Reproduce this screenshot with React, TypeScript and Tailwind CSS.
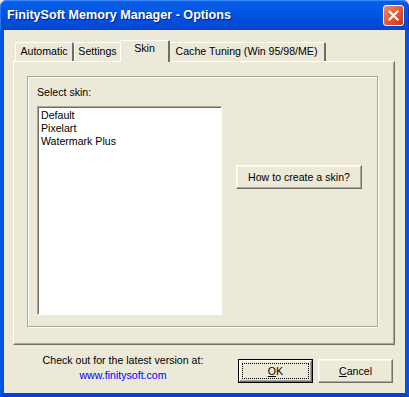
import React from "react";

const font = { fontFamily: '"Liberation Sans", Arial, sans-serif' };

function TitleBar() {
  return (
    <div className="relative h-[30px] rounded-t-[7px] bg-gradient-to-b from-[#0a5fe8] via-[#0054e3] to-[#0045d0] flex items-center pl-[7px] pr-[5px] shadow-[inset_0_1px_0_#3d8bff,inset_1px_0_0_#2a74f5,inset_-1px_0_0_#0038b8]">
      <span className="flex-1 text-white font-bold text-[12.6px] [text-shadow:1px_1px_0_#0a1e7f]">
        FinitySoft Memory Manager - Options
      </span>
      <button className="w-[21px] h-[21px] rounded-[3px] border border-white bg-gradient-to-br from-[#e9886a] via-[#e35b35] to-[#c53416] flex items-center justify-center">
        <svg width="11" height="11" viewBox="0 0 11 11">
          <path d="M1.5 1.5 L9.5 9.5 M9.5 1.5 L1.5 9.5" stroke="white" strokeWidth="2.2" strokeLinecap="square" />
        </svg>
      </button>
    </div>
  );
}

function Tab({ label, width, selected }: { label: string; width: number; selected?: boolean }) {
  if (selected) {
    return (
      <div
        className="relative z-10 -mx-[2px] -mb-px h-[22px] bg-[#ece9d8] border-l border-t border-white border-r-2 border-r-[#716f64] rounded-t-[2px] flex items-start justify-center pt-[2px]"
        style={{ width: width + 4 }}
      >
        {label}
      </div>
    );
  }
  return (
    <div
      className="h-[19px] bg-[#ece9d8] border-l border-t border-white border-r-2 border-r-[#716f64] rounded-t-[2px] flex items-center justify-center pb-[1px]"
      style={{ width }}
    >
      {label}
    </div>
  );
}

function XPButton({ children, def, w }: { children: React.ReactNode; def?: boolean; w: string }) {
  return (
    <div className={`${w} h-[24px] ${def ? "border border-black" : ""}`}>
      <div className="w-full h-full bg-[#ece9d8] border-t border-l border-white border-r border-b border-r-[#716f64] border-b-[#716f64] shadow-[inset_-1px_-1px_0_#aca899,inset_1px_1px_0_#f5f4ea] flex items-center justify-center p-[2px]">
        {def ? (
          <div className="w-full h-full border border-dotted border-black flex items-center justify-center">{children}</div>
        ) : (
          children
        )}
      </div>
    </div>
  );
}

export default function App() {
  return (
    <div className="w-[409px] h-[397px] bg-[#ece9d8] text-[10.6px] text-black leading-none" style={font}>
      <TitleBar />
      <div className="h-[367px] border-x-4 border-b-4 border-x-[#0054e3] border-b-[#0045d0] bg-[#ece9d8] flex flex-col">
        {/* tabs */}
        <div className="pl-[9px] pr-[10px] pt-[9px]">
          <div className="flex items-end pl-[2px] h-[22px]">
            <Tab label="Automatic" width={59} />
            <Tab label="Settings" width={48} />
            <Tab label="Skin" width={46} selected />
            <Tab label="Cache Tuning (Win 95/98/ME)" width={158} />
          </div>
          {/* panel */}
          <div className="h-[284px] border-t border-l border-white border-r border-b border-r-[#716f64] border-b-[#716f64] shadow-[inset_-1px_-1px_0_#aca899] pt-[14px] pl-[13px]">
            <div className="w-[351px] h-[251px] border border-[#aca899] shadow-[inset_1px_1px_0_white,1px_1px_0_white] pt-[10px] pl-[9px] flex flex-col">
              <div className="h-[12px] mb-[7px]">Select skin:</div>
              <div className="flex">
                <div className="w-[185px] h-[209px] bg-white border-t border-l border-[#aca899] border-r border-b border-r-white border-b-white shadow-[inset_1px_1px_0_#716f64] pl-[3px] pt-[2px] leading-[13px]">
                  <div>Default</div>
                  <div>Pixelart</div>
                  <div>Watermark Plus</div>
                </div>
                <div className="ml-[14px] mt-[59px]">
                  <XPButton w="w-[126px]">How to create a skin?</XPButton>
                </div>
              </div>
            </div>
          </div>
        </div>
        {/* bottom */}
        <div className="flex pl-[9px] pt-[14px]">
          <div className="w-[225px] -mt-[6px] flex flex-col items-center pr-[5px] leading-[15px]">
            <div>Check out for the latest version at:</div>
            <div className="text-[#0000ff]">www.finitysoft.com</div>
          </div>
          <XPButton def w="w-[75px]">
            <span>
              <span className="underline">O</span>K
            </span>
          </XPButton>
          <div className="ml-[5px]">
            <XPButton w="w-[75px]">
              <span>
                <span className="underline">C</span>ancel
              </span>
            </XPButton>
          </div>
        </div>
      </div>
    </div>
  );
}
